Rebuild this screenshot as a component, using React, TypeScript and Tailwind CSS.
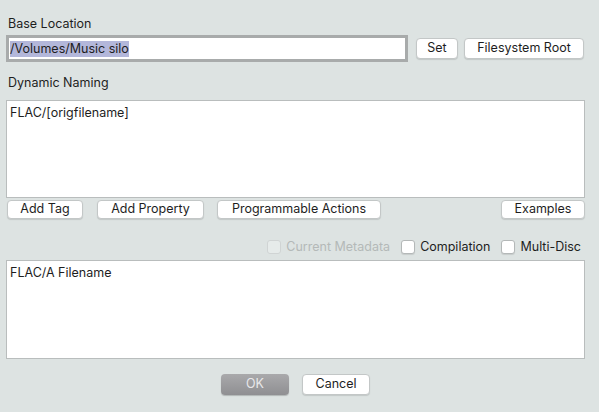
import React from 'react';

const font = { fontFamily: 'Inter, "Noto Sans", sans-serif' };

function Btn({ w, children, className = '' }: { w: string; children: React.ReactNode; className?: string }) {
  return (
    <div
      className={`${w} flex items-center justify-center rounded-[4px] border border-[#c3c7c7] bg-white text-[12.5px] text-[#1e1e1e] shadow-[0_1px_1px_rgba(0,0,0,0.12)] ${className}`}
    >
      {children}
    </div>
  );
}

function Check({ label, disabled }: { label: string; disabled?: boolean }) {
  return (
    <div className="flex items-center gap-[5px] h-[14px]">
      <div
        className={`w-[14px] h-[14px] rounded-[3px] border ${
          disabled ? 'border-[#d0d4d4] bg-[#e6ebea]' : 'border-[#b4b8b8] bg-white shadow-[0_1px_1px_rgba(0,0,0,0.1)]'
        }`}
      />
      <span className={`text-[12.5px] leading-[14px] ${disabled ? 'text-[#b4b9b8]' : 'text-[#1e1e1e]'}`}>{label}</span>
    </div>
  );
}

export default function App() {
  return (
    <div className="w-[599px] h-[412px] bg-[#dde3e2] overflow-hidden pl-[6px] pr-[14px] text-[#1e1e1e]" style={font}>
      <div className="pt-[17px] pl-[2px] h-[31px] text-[12.5px] leading-[14px]">Base Location</div>

      <div className="mt-[4px] flex items-center h-[27px]">
        <div className="w-[402px] h-[27px] border-[3px] border-[#a8abab] bg-white flex items-center pl-[1px]">
          <span className="bg-[#b3b7da] text-[12.5px] leading-[16px]">/Volumes/Music silo</span>
        </div>
        <Btn w="w-[42px]" className="ml-[8px] h-[21px]">Set</Btn>
        <Btn w="w-[120px]" className="ml-[6px] h-[21px]">Filesystem Root</Btn>
      </div>

      <div className="mt-[14px] pl-[2px] h-[14px] text-[12.5px] leading-[14px]">Dynamic Naming</div>

      <div className="mt-[10px] h-[98px] border border-[#b9bdbd] bg-white px-[3px] pt-[4px] text-[12.5px] leading-[16px]">
        FLAC/[origfilename]
      </div>

      <div className="mt-[2px] flex items-center pl-[1px] h-[19px]">
        <Btn w="w-[76px]" className="h-[19px]">Add Tag</Btn>
        <Btn w="w-[107px]" className="ml-[14px] h-[19px]">Add Property</Btn>
        <Btn w="w-[164px]" className="ml-[13px] h-[19px]">Programmable Actions</Btn>
        <Btn w="w-[84px]" className="ml-auto h-[19px]">Examples</Btn>
      </div>

      <div className="mt-[21px] flex items-center justify-end gap-[11px] pr-[4px] h-[14px]">
        <Check label="Current Metadata" disabled />
        <Check label="Compilation" />
        <Check label="Multi-Disc" />
      </div>

      <div className="mt-[6px] h-[99px] border border-[#b9bdbd] bg-white px-[3px] pt-[4px] text-[12.5px] leading-[16px]">
        FLAC/A Filename
      </div>

      <div className="mt-[15px] flex items-center justify-center gap-[13px]">
        <div className="w-[68px] h-[21px] flex items-center justify-center rounded-[4px] bg-gradient-to-b from-[#a9a9ab] to-[#8f8f92] text-[12.5px] text-[#e8e8ea] shadow-[0_1px_1px_rgba(0,0,0,0.2)]">
          OK
        </div>
        <Btn w="w-[68px]" className="h-[21px]">Cancel</Btn>
      </div>
    </div>
  );
}
